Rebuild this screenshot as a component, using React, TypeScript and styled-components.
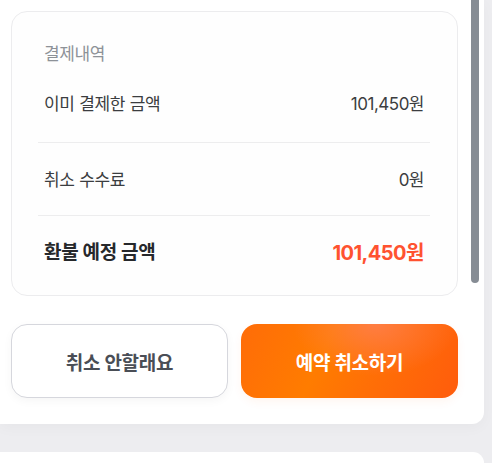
import React from "react";
import styled, { createGlobalStyle } from "styled-components";

const Global = createGlobalStyle`
  html, body { margin: 0; padding: 0; background: #ededf0; }
  body { font-family: Inter, "Noto Sans CJK KR", "Noto Sans", sans-serif; -webkit-font-smoothing: antialiased; }
`;

const Page = styled.div`
  width: 492px;
  height: 463px;
  overflow: hidden;
  display: flex;
  flex-direction: column;
  gap: 28px;
`;

const Panel = styled.div<{ $top?: boolean }>`
  position: relative;
  width: 484px;
  box-sizing: border-box;
  background: #ffffff;
  border-radius: ${(p) => (p.$top ? "0 12px 0 0" : "0 0 12px 0")};
  padding: ${(p) => (p.$top ? "0" : "11px 26px 26px 11px")};
  flex: ${(p) => (p.$top ? "1" : "none")};
  box-shadow: ${(p) => (p.$top ? "none" : "0 4px 14px rgba(0,0,0,0.03)")};
`;

const Scrollbar = styled.div`
  position: absolute;
  top: 0;
  right: 5px;
  width: 8px;
  height: 283px;
  background: #868c94;
  border-radius: 0 0 4px 4px;
`;

const Card = styled.section`
  box-sizing: border-box;
  height: 285px;
  border: 1px solid #ececee;
  border-radius: 16px;
  background: #fefefe;
  padding: 30px 27px 0 26px;
`;

const Title = styled.div`
  padding: 0 6px;
  font-size: 17px;
  line-height: 24px;
  color: #8d9298;
  letter-spacing: -0.4px;
`;

const Row = styled.div<{ $pt: number; $pb: number; $line?: boolean }>`
  display: flex;
  justify-content: space-between;
  align-items: center;
  padding: ${(p) => `${p.$pt}px 6px ${p.$pb}px`};
  border-bottom: ${(p) => (p.$line ? "1px solid #ededee" : "none")};
`;

const Label = styled.span<{ $bold?: boolean }>`
  font-size: ${(p) => (p.$bold ? "19px" : "17px")};
  line-height: 26px;
  font-weight: ${(p) => (p.$bold ? 700 : 400)};
  color: ${(p) => (p.$bold ? "#26282b" : "#3b3d40")};
  letter-spacing: -0.3px;
`;

const Value = styled.span<{ $accent?: boolean }>`
  font-size: ${(p) => (p.$accent ? "20px" : "17px")};
  line-height: 26px;
  font-weight: ${(p) => (p.$accent ? 700 : 400)};
  color: ${(p) => (p.$accent ? "#ff5230" : "#3b3d40")};
  letter-spacing: -0.5px;
`;

const Actions = styled.div`
  display: grid;
  grid-template-columns: 1fr 1fr;
  gap: 13px;
  margin-top: 28px;
`;

const Button = styled.button<{ $primary?: boolean }>`
  height: 74px;
  border-radius: 16px;
  font-family: inherit;
  font-size: 19px;
  font-weight: 700;
  letter-spacing: -0.3px;
  cursor: pointer;
  border: ${(p) => (p.$primary ? "none" : "1px solid #d6d7dd")};
  color: ${(p) => (p.$primary ? "#ffffff" : "#4a4e56")};
  background: ${(p) =>
    p.$primary
      ? "radial-gradient(ellipse 38% 70% at 62% 0%, rgba(255,130,100,0.65), rgba(255,130,100,0) 100%), linear-gradient(115deg, #ff6c08 0%, #ff7c00 38%, #ff7006 60%, #ff5c0c 100%)"
      : "#ffffff"};
  box-shadow: ${(p) => (p.$primary ? "0 4px 10px rgba(255,110,20,0.06)" : "0 3px 10px rgba(0,0,0,0.04)")};
`;

export default function App() {
  return (
    <>
      <Global />
      <Page>
        <Panel>
          <Card>
            <Title>결제내역</Title>
            <Row $pt={25} $pb={25} $line>
              <Label>이미 결제한 금액</Label>
              <Value>101,450원</Value>
            </Row>
            <Row $pt={24} $pb={22} $line>
              <Label>취소 수수료</Label>
              <Value>0원</Value>
            </Row>
            <Row $pt={24} $pb={0}>
              <Label $bold>환불 예정 금액</Label>
              <Value $accent>101,450원</Value>
            </Row>
          </Card>
          <Actions>
            <Button>취소 안할래요</Button>
            <Button $primary>예약 취소하기</Button>
          </Actions>
          <Scrollbar />
        </Panel>
        <Panel $top />
      </Page>
    </>
  );
}
